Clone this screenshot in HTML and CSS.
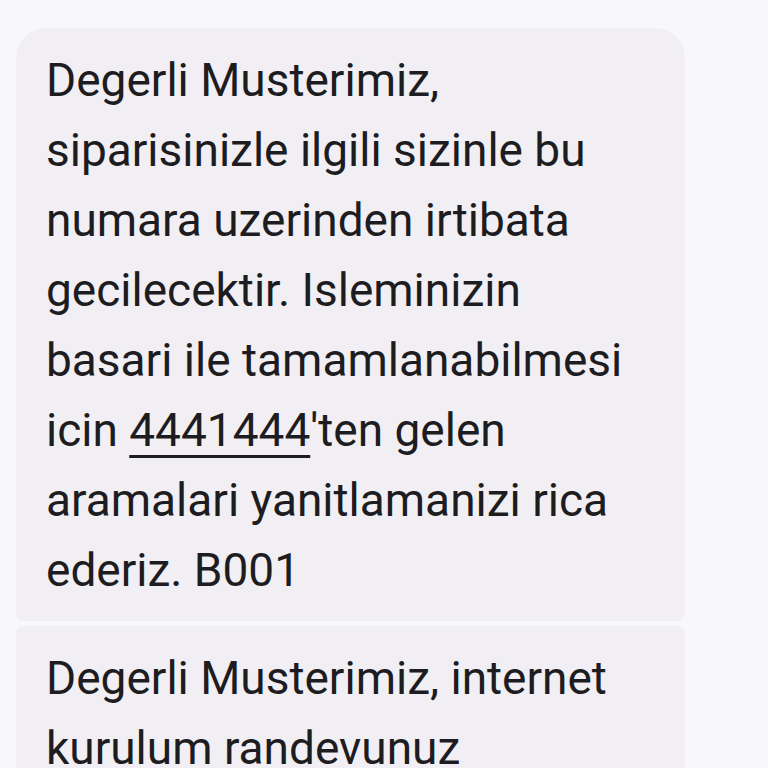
FILE: index.html
```html
<!DOCTYPE html>
<html lang="tr">
<head>
<meta charset="utf-8">
<link rel="stylesheet" href="styles.css">
</head>
<body>
<div class="thread">
  <div class="bubble first">Degerli Musterimiz, siparisinizle ilgili sizinle bu numara uzerinden irtibata gecilecektir. Isleminizin basari ile tamamlanabilmesi icin <span class="link">4441444</span>'ten gelen aramalari yanitlamanizi rica ederiz. B001</div>
  <div class="bubble second">Degerli Musterimiz, internet kurulum randevunuz olusturulmustur.</div>
</div>
</body>
</html>
```
FILE: styles.css
```css
html, body {
  margin: 0;
  padding: 0;
  background: #f8f8fc;
  height: 768px;
  overflow: hidden;
}
.thread {
  display: flex;
  flex-direction: column;
  gap: 5px;
  padding: 28px 0 0 16px;
}
.bubble {
  width: 669px;
  box-sizing: border-box;
  background: #f1eff4;
  color: #1d1c21;
  font-family: Roboto, "Noto Sans", sans-serif;
  font-size: 46px;
  line-height: 70px;
  padding: 17px 40px 16px 30px;
}
.first {
  border-radius: 30px 30px 8px 8px;
}
.second {
  border-radius: 8px 8px 30px 30px;
}
.link {
  text-decoration: underline;
  text-decoration-thickness: 3px;
  text-underline-offset: 9px;
}
```
